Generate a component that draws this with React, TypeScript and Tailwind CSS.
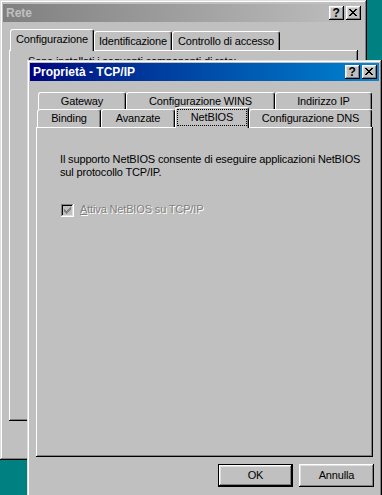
import React from "react";

const RAISED =
  "shadow-[inset_-1px_-1px_#000000,inset_1px_1px_#ffffff,inset_-2px_-2px_#808080,inset_2px_2px_#dfdfdf]";
const WINDOW =
  "shadow-[inset_-1px_-1px_#000000,inset_1px_1px_#dfdfdf,inset_-2px_-2px_#808080,inset_2px_2px_#ffffff]";
const PANEL =
  "shadow-[inset_-1px_-1px_#000000,inset_1px_1px_#ffffff,inset_-2px_-2px_#808080]";

function CloseGlyph() {
  const rects: [number, number, number][] = [
    [0, 0, 2], [6, 0, 2], [1, 1, 2], [5, 1, 2], [2, 2, 4], [3, 3, 2],
    [2, 4, 4], [1, 5, 2], [5, 5, 2], [0, 6, 2], [6, 6, 2],
  ];
  return (
    <svg width="8" height="7" viewBox="0 0 8 7" shapeRendering="crispEdges">
      {rects.map(([x, y, w], i) => (
        <rect key={i} x={x} y={y} width={w} height={1} fill="#000000" />
      ))}
    </svg>
  );
}

function CheckGlyph() {
  const rects: [number, number, number][] = [
    [6, 0, 1], [5, 1, 2], [0, 2, 1], [4, 2, 3], [0, 3, 2], [3, 3, 3],
    [0, 4, 5], [1, 5, 3], [2, 6, 1],
  ];
  return (
    <svg width="7" height="7" viewBox="0 0 7 7" shapeRendering="crispEdges">
      {rects.map(([x, y, w], i) => (
        <rect key={i} x={x} y={y} width={w} height={1} fill="#808080" />
      ))}
    </svg>
  );
}

function CapButton({ children }: { children: React.ReactNode }) {
  return (
    <div className={`flex h-[14px] w-[15px] items-center justify-center bg-[#c0c0c0] pb-[1px] pr-[1px] ${RAISED}`}>
      {children}
    </div>
  );
}

function TitleBar({ title, active, right }: { title: string; active?: boolean; right: string }) {
  return (
    <div
      className={`flex h-[18px] shrink-0 items-center pl-[3px] ${right} ${
        active ? "bg-linear-to-r from-[#000080] to-[#1084d0]" : "bg-linear-to-r from-[#808080] to-[#c0c0c0]"
      }`}
    >
      <span className={`flex-1 text-[12px] font-bold leading-[14px] tracking-normal ${active ? "text-white" : "text-[#c0c0c0]"}`}>
        {title}
      </span>
      <div className="flex gap-[2px]">
        <CapButton>
          <span className="text-[12px] font-bold leading-[12px] text-black">?</span>
        </CapButton>
        <CapButton>
          <CloseGlyph />
        </CapButton>
      </div>
    </div>
  );
}

function Tab({ label, className }: { label: string; className: string }) {
  return (
    <div
      className={`flex shrink-0 items-center justify-center rounded-t-[3px] border-l border-r border-t border-l-white border-r-black border-t-white bg-[#c0c0c0] shadow-[inset_-1px_0_#808080] ${className}`}
    >
      {label}
    </div>
  );
}

function SelectedTab({ label, className, focus }: { label: string; className: string; focus?: boolean }) {
  return (
    <div
      className={`relative z-10 -mb-px flex shrink-0 rounded-t-[3px] border-l border-r border-t border-l-white border-r-black border-t-white bg-[#c0c0c0] shadow-[inset_-1px_0_#808080] ${className}`}
    >
      {focus ? (
        <div className="flex flex-1 px-[1px] pb-[2px] pt-[1px]">
          <div className="flex flex-1 items-center justify-center border border-dotted border-black pb-[1px]">
            {label}
          </div>
        </div>
      ) : (
        <div className="flex flex-1 items-center justify-center pb-[2px]">{label}</div>
      )}
    </div>
  );
}

function Button({ label, def }: { label: string; def?: boolean }) {
  return (
    <div className={`h-[23px] w-[75px] bg-[#c0c0c0] ${def ? "border border-black" : ""}`}>
      <div className={`flex h-full w-full items-center justify-center ${RAISED}`}>{label}</div>
    </div>
  );
}

export default function App() {
  return (
    <div className="relative h-[495px] w-[382px] overflow-hidden bg-[#008080] font-['Liberation_Sans',Arial,sans-serif] text-[11px] leading-[13px] tracking-[-0.15px] text-black">
      {/* Back window: Rete */}
      <div className={`absolute left-0 top-0 flex h-[460px] w-[367px] flex-col bg-[#c0c0c0] px-[3px] pb-[3px] pt-[4px] ${WINDOW}`}>
        <TitleBar title="Rete" right="pr-[3px]" />
        <div className="flex flex-col px-[6px] pt-[7px]">
          <div className="flex h-[21px] items-end pl-[1px]">
            <SelectedTab label="Configurazione" className="h-[22px] w-[84px]" />
            <Tab label="Identificazione" className="h-[19px] w-[78px]" />
            <Tab label="Controllo di accesso" className="h-[19px] w-[108px]" />
          </div>
          <div className={`h-[371px] bg-[#c0c0c0] pl-[19px] pt-[5px] ${PANEL}`}>
            <p>Sono installati i seguenti componenti di rete:</p>
          </div>
        </div>
      </div>

      {/* Front window: Proprietà - TCP/IP */}
      <div className={`absolute left-[27px] top-[60px] flex h-[440px] w-[355px] flex-col bg-[#c0c0c0] p-[3px] ${WINDOW}`}>
        <TitleBar title="Proprietà - TCP/IP" active right="pr-[2px]" />
        <div className="flex flex-col px-[6px] pt-[11px]">
          <div className="flex h-[17px] pl-[2px]">
            <Tab label="Gateway" className="h-[17px] w-[88px]" />
            <Tab label="Configurazione WINS" className="h-[17px] w-[149px]" />
            <Tab label="Indirizzo IP" className="h-[17px] w-[97px]" />
          </div>
          <div className="flex h-[18px] items-end pl-[1px]">
            <Tab label="Binding" className="h-[18px] w-[64px]" />
            <Tab label="Avanzate" className="h-[18px] w-[74px]" />
            <SelectedTab label="NetBIOS" focus className="h-[21px] w-[74px]" />
            <Tab label="Configurazione DNS" className="h-[18px] w-[123px]" />
          </div>
          <div className={`h-[330px] bg-[#c0c0c0] pl-[24px] pt-[26px] ${PANEL}`}>
            <p>
              Il supporto NetBIOS consente di eseguire applicazioni NetBIOS
              <br />
              sul protocollo TCP/IP.
            </p>
            <div className="mt-[24px] flex items-start">
              <div className="ml-[1px] mt-[1px] flex h-[13px] w-[13px] items-center justify-center bg-[#c0c0c0] shadow-[inset_-1px_-1px_#ffffff,inset_1px_1px_#808080,inset_-2px_-2px_#dfdfdf,inset_2px_2px_#000000]">
                <CheckGlyph />
              </div>
              <span className="ml-[6px] text-[#808080] [text-shadow:1px_1px_0_#ffffff]">
                <u>A</u>ttiva NetBIOS su TCP/IP
              </span>
            </div>
          </div>
        </div>
        <div className="mt-[7px] flex justify-end gap-[6px] pr-[5px]">
          <Button label="OK" def />
          <Button label="Annulla" />
        </div>
      </div>
    </div>
  );
}
